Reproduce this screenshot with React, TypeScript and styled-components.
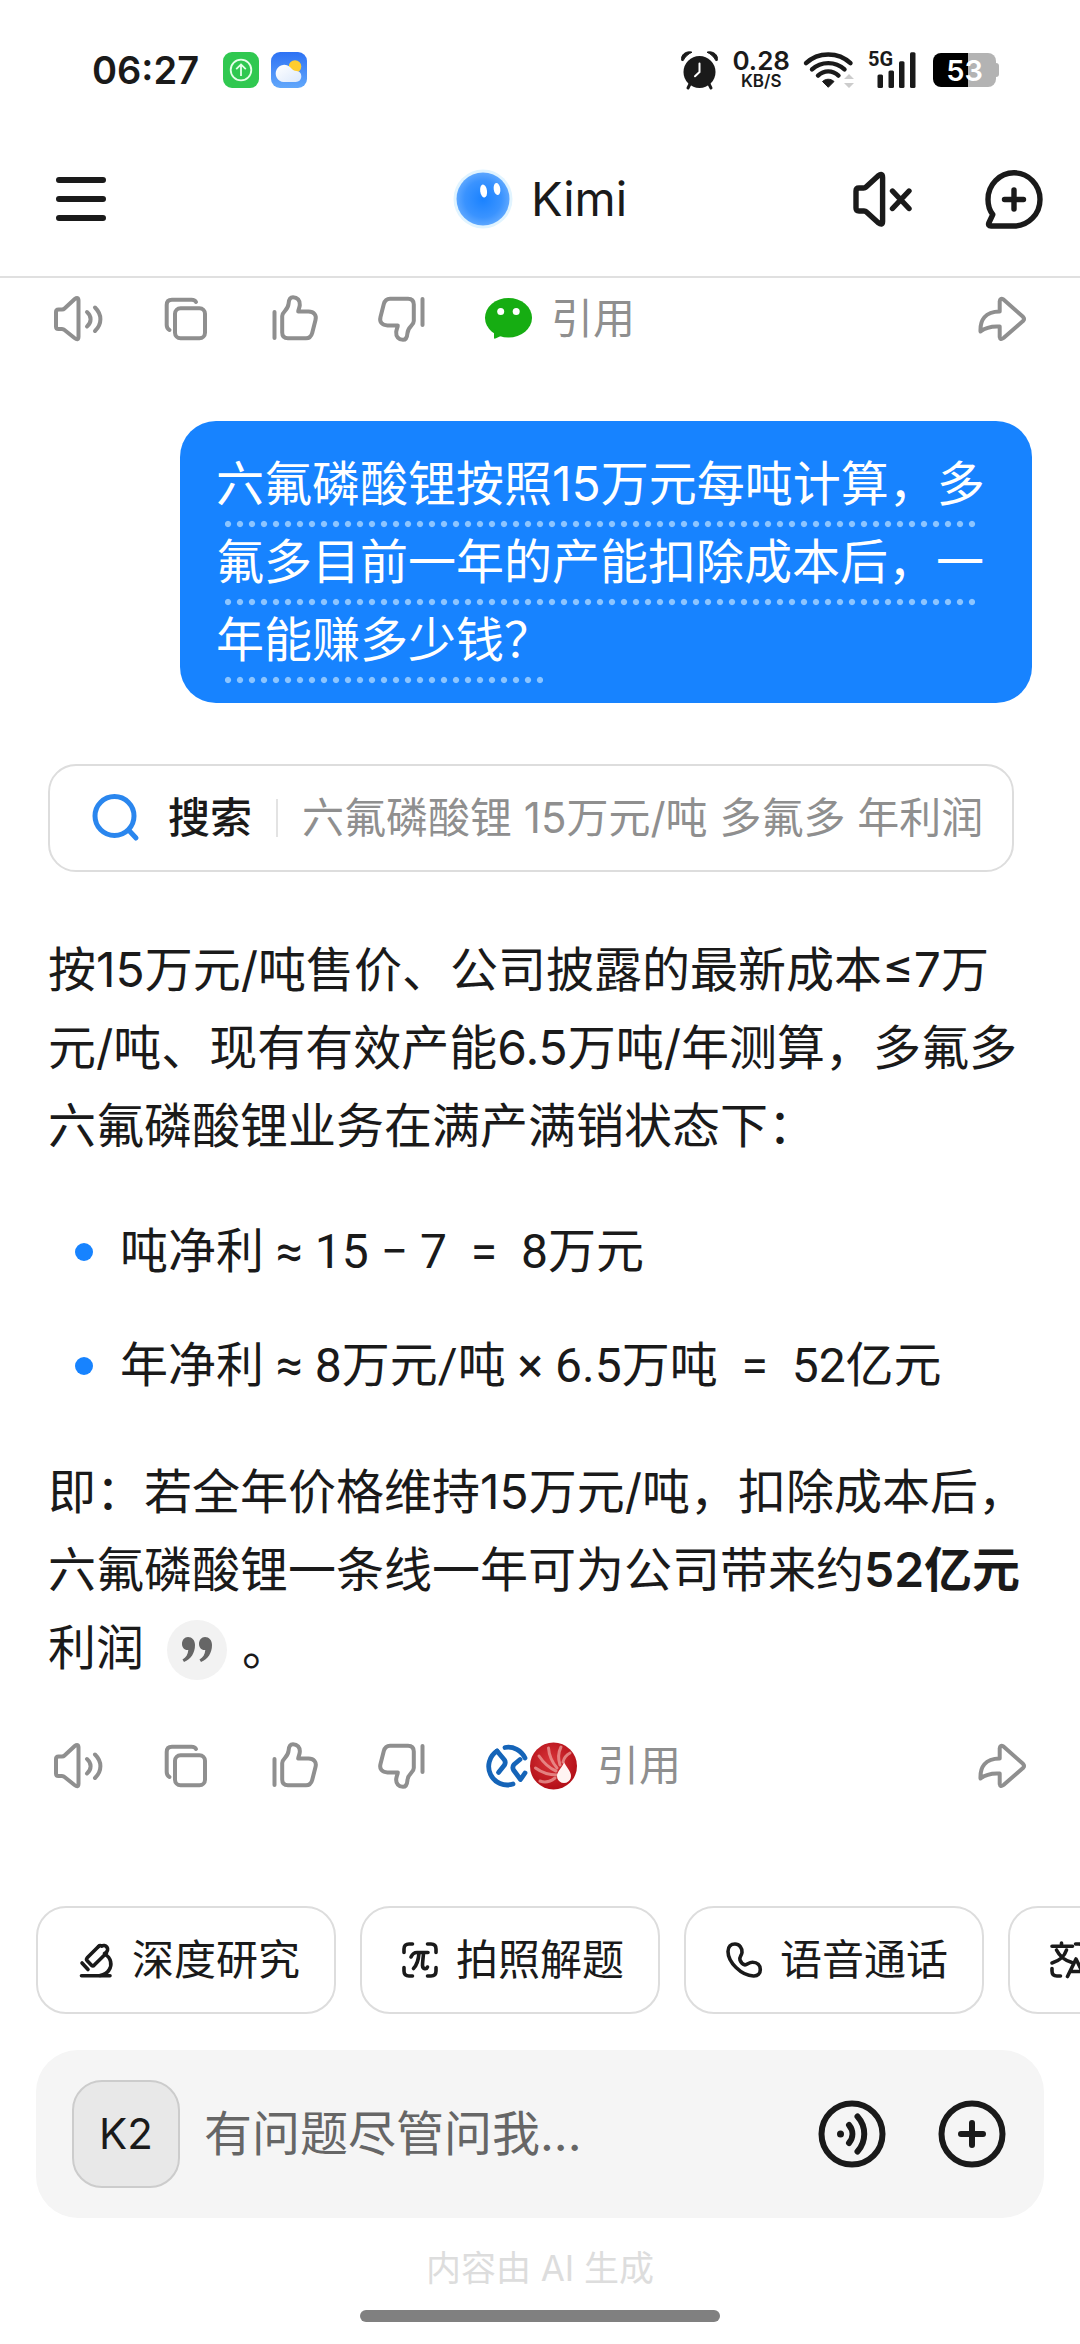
import { FC, ReactNode } from "react";
import styled, { createGlobalStyle } from "styled-components";

const GlobalStyle = createGlobalStyle`
    * {
        box-sizing: border-box;
    }

    body {
        margin: 0;
        background: #fff;
        color: #1a1a1a;
        font-family: Inter, "Noto Sans CJK SC", sans-serif;
        font-size: 48px;
        line-height: 78px;
    }

    button,
    input {
        font: inherit;
        color: inherit;
    }

    svg {
        display: block;
        flex: none;
        overflow: visible;
    }
`;

interface IconProps {
    size: number;
    width?: number;
    stroke?: number;
    children: ReactNode;
}

const Icon: FC<IconProps> = ({ size, width, stroke = 4, children }) => (
    <svg
        width={width ?? size}
        height={size}
        viewBox={`0 0 ${width ?? size} ${size}`}
        fill="none"
        stroke="currentColor"
        strokeWidth={stroke}
        strokeLinecap="round"
        strokeLinejoin="round"
        aria-hidden="true"
    >
        {children}
    </svg>
);

const UploadBadge = () => (
    <svg width="36" height="36" viewBox="0 0 36 36" aria-hidden="true">
        <rect width="36" height="36" rx="9" fill="#30c850" />
        <g fill="none" stroke="#e6ffe9" strokeWidth="1.8">
            <circle cx="18" cy="18" r="10.3" />
            <path d="M18 24V13M13.2 17.2L18 12.4L22.8 17.2" />
        </g>
    </svg>
);

const WeatherBadge = () => (
    <svg width="36" height="36" viewBox="0 0 36 36" aria-hidden="true">
        <defs>
            <linearGradient id="sky" x1="0" y1="0" x2="0" y2="1">
                <stop offset="0" stopColor="#2d72f4" />
                <stop offset="1" stopColor="#62a8fb" />
            </linearGradient>
            <linearGradient id="cloud" x1="0" y1="0" x2="1" y2="1">
                <stop offset="0" stopColor="#fff" />
                <stop offset="1" stopColor="#dbe8fb" />
            </linearGradient>
        </defs>
        <rect width="36" height="36" rx="9" fill="url(#sky)" />
        <circle cx="24" cy="14.5" r="6.3" fill="#ffcd2e" />
        <path
            d="M12.5 30A8.6 8.6 0 1 1 19.5 15.5C21 17.5 23 18.8 25.5 19C28.5 19.2 30.3 21 30.3 24.3C30.3 27.8 28 30 24.8 30Z"
            fill="url(#cloud)"
        />
    </svg>
);

const AlarmIcon = () => (
    <svg width="38" height="38" viewBox="0 0 38 38" aria-hidden="true">
        <circle cx="18.5" cy="21" r="16" fill="#1a1a1a" />
        <path
            d="M.8 9.5C-.8 4 5-.6 11 1.2C7 3 3.8 6 2.2 9.6ZM36.2 9.5C37.8 4 32-.6 26 1.2C30 3 33.2 6 34.8 9.6Z"
            fill="#1a1a1a"
            stroke="#1a1a1a"
            strokeLinejoin="round"
        />
        <path
            d="M9 33L7 37M28 33L30 37"
            stroke="#1a1a1a"
            strokeWidth="3"
            strokeLinecap="round"
        />
        <path
            d="M18.5 12.5V21L14 25.3"
            fill="none"
            stroke="#fff"
            strokeWidth="2"
            strokeLinecap="round"
        />
    </svg>
);

const WifiIcon = () => (
    <svg width="52" height="38" viewBox="0 0 52 38" aria-hidden="true">
        <g
            fill="none"
            stroke="#1a1a1a"
            strokeWidth="4.4"
            strokeLinecap="round"
        >
            <path d="M3 12.2C15 .5 35.5 .5 47.5 12.2" />
            <path d="M9 18.4C18 10 32.5 10 41.5 18.4" />
            <path d="M15 24.6C21 19 29.5 19 35.5 24.6" />
        </g>
        <path
            d="M19.5 30.5C22.8 27.5 27.7 27.5 31 30.5L25.25 36.3Z"
            fill="#1a1a1a"
            stroke="#1a1a1a"
            strokeLinejoin="round"
        />
        <path d="M41 28L46 23L51 28ZM41 32H51L46 37Z" fill="#ccc" />
    </svg>
);

const SignalIcon = () => (
    <svg width="48" height="38" viewBox="0 0 48 38" aria-hidden="true">
        <g fill="#1a1a1a">
            <rect x="9.5" y="23.4" width="5.5" height="13.6" rx="1.5" />
            <rect x="20.5" y="19.4" width="5.5" height="17.6" rx="1.5" />
            <rect x="31" y="10.3" width="5.5" height="26.7" rx="1.5" />
            <rect x="42" y="1.2" width="5.5" height="35.8" rx="1.5" />
        </g>
    </svg>
);

const MenuIcon = () => (
    <Icon size={60} width={72} stroke={6}>
        <path d="M23 11H67M23 30H67M23 49H67" />
    </Icon>
);

const KimiFace = () => (
    <svg width="60" height="60" viewBox="0 0 60 60" aria-hidden="true">
        <defs>
            <radialGradient id="face" cx=".5" cy=".5" r=".58">
                <stop offset="0" stopColor="#1a82ff" />
                <stop offset=".6" stopColor="#3a93ff" />
                <stop offset="1" stopColor="#6fb1ff" />
            </radialGradient>
        </defs>
        <circle cx="30" cy="30" r="29.5" fill="#e1f4ff" />
        <circle cx="30" cy="30" r="26.5" fill="url(#face)" />
        <ellipse
            cx="30.6"
            cy="22"
            rx="3.4"
            ry="6.6"
            fill="#fff"
            transform="rotate(-8 30.6 22)"
        />
        <ellipse
            cx="44"
            cy="20"
            rx="3.3"
            ry="6"
            fill="#fff"
            transform="rotate(-8 44 20)"
        />
    </svg>
);

const MuteIcon = () => (
    <Icon size={60} stroke={5.4}>
        <path d="M7 19H11.5Q13 19 14 18L26 7Q30.6 3.5 30.6 8.5V52.5Q30.6 57 26 53.5L14.5 43Q13.5 42 12 42H7Q4 42 4 39V22Q4 19 7 19Z" />
        <path d="M40.5 22L57 39.5M57 22L40.5 39.5" />
    </Icon>
);

const NewChatIcon = () => (
    <Icon size={60} stroke={5.4}>
        <path d="M30 57H7Q3.7 57 4.8 54L8.8 45.5C5.5 41.5 4 36.5 4 30.5A26 26.6 0 1 1 30 57Z" />
        <path d="M30 21V40M20.5 30.5H39.5" />
    </Icon>
);

const SpeakerIcon = () => (
    <Icon size={48}>
        <path d="M4.5 14.5H8Q9.5 14.5 10.5 13.5L20.5 4.2Q24.5 1.5 24.5 5.5V41.5Q24.5 46 20.5 43L10.5 35Q9.5 34 8 34H4.5Q2 34 2 31.5V17Q2 14.5 4.5 14.5Z" />
        <path d="M33 17C37.8 21 37.8 27.5 33 31.5M41 12.5C48.2 19.5 48.2 29 41 36" />
    </Icon>
);

const CopyIcon = () => (
    <Icon size={48}>
        <path d="M7.5 35Q4.7 33.5 4.7 30V10Q4.7 4.7 10 4.7H29.5Q33 4.7 34 7" />
        <rect x="13" y="13.3" width="30" height="30" rx="5.5" />
    </Icon>
);

const thumbPath =
    "M12.2 21C12.2 16 18 16 18.6 8.5C18.9 4.2 20 2.2 23 2.2C27.3 2.2 30.2 5.5 29.8 10C29.6 12.5 28.5 14 28.2 16.6H38.5C44 16.6 46.8 20 45.5 25L42.2 38C41.2 41.7 39.5 43.3 36 43.3H18Q12.2 43.3 12.2 37.5Z";

const ThumbUpIcon = () => (
    <Icon size={48}>
        <path d="M4.5 17V43" />
        <path d={thumbPath} />
    </Icon>
);

const ThumbDownIcon = () => (
    <Icon size={48}>
        <g transform="rotate(180 24 23.5)">
            <path d="M3.5 17V43" />
            <path d={thumbPath} />
        </g>
    </Icon>
);

const ShareIcon = () => (
    <Icon size={48}>
        <path d="M21.7 16.6V6.5Q22 2.5 25.5 4.5L45 21.8Q47 24 45 26L25.5 43Q22.2 45.5 21.7 42V31.5C14 31 7.5 32.5 2.5 36.5C2 25 7 16.8 21.7 16.6Z" />
    </Icon>
);

const WechatIcon = () => (
    <svg width="48" height="48" viewBox="2 0 48 48" aria-hidden="true">
        <g fill="#16ad12">
            <ellipse cx="24.5" cy="22.7" rx="23.5" ry="19.7" />
            <path d="M10 34V42Q9.5 44.5 12 43.3L20 39.5Z" />
        </g>
        <circle cx="16.7" cy="16.5" r="3.5" fill="#fff" />
        <circle cx="32.2" cy="16.5" r="3.5" fill="#fff" />
    </svg>
);

const SourceLogos = () => (
    <svg width="94" height="48" viewBox="2 0 94 48" aria-hidden="true">
        <defs>
            <radialGradient id="shell" cx=".45" cy=".4" r=".6">
                <stop offset="0" stopColor="#d8343a" />
                <stop offset="1" stopColor="#b30f17" />
            </radialGradient>
        </defs>
        <g
            fill="none"
            stroke="#1564b8"
            strokeWidth="4.8"
            strokeLinecap="round"
            strokeLinejoin="round"
        >
            <path d="M21 5.5A18.5 18.5 0 0 1 41 16" />
            <path d="M13 9A18.5 18.5 0 0 0 29 42" />
            <path d="M13 9L20.5 18Q22 20.5 20.5 23L14.5 30.5" />
            <path d="M36 17.5L30 22.5Q28 25 29.5 28L36.5 37.5L41 31" />
        </g>
        <circle cx="69.5" cy="24" r="26" fill="#fff" />
        <circle cx="69.5" cy="24" r="23.5" fill="url(#shell)" />
        <g
            fill="none"
            stroke="#f0a9a5"
            strokeWidth="3"
            strokeLinecap="round"
            opacity=".7"
        >
            <path d="M73 33C64 33 57 30 51.5 26" />
            <path d="M72 29C65 26 59 20 55 14" />
            <path d="M73 26C68 20 65 13 64.5 6" />
            <path d="M76 23C74 17 74 11 77 5" />
            <path d="M79 20C80 16 82 13 86 11" />
            <path d="M71 36C66 40 61 41 56 39" />
        </g>
        <path
            d="M80 20C82 25 87 29 87 34C87 38 84 41 80 41C76 41 73 38 73 34C73 29 79 25 80 20Z"
            fill="#fff4f2"
        />
    </svg>
);

const SearchIcon = () => (
    <Icon size={48} stroke={5}>
        <circle cx="22.5" cy="22" r="19.5" />
        <path d="M37.5 37L44 44" />
    </Icon>
);

const MicroscopeIcon = () => (
    <Icon size={36} stroke={3.6}>
        <path d="M3.5 33.7H32" />
        <path d="M27 12.5C33 15.5 34.5 23 31 28C29 31.5 26 33 22 33.5" />
        <path d="M20.5 4.5L9.2 15.8Q8 17.2 9 18.5L13.5 23.3Q15 24.5 16.3 23L28.5 11" />
        <path d="M20.5 4.5Q22 3 23.5 4.2A3.8 3.8 0 1 1 28 10.5L26.5 11.5" />
        <path d="M4 21L10 27.5" />
    </Icon>
);

const PiScanIcon = () => (
    <Icon size={36} stroke={3.6}>
        <path d="M2 10.5V7Q2 2 7 2H10.5M25.5 2H29Q34 2 34 7V10.5M34 25.5V29Q34 34 29 34H25.5M10.5 34H7Q2 34 2 29V25.5" />
        <path d="M9 15C10.5 11.5 12 10.5 15 10.5H26M17 11C16.5 18 15 23 11.5 26.5M21.5 11C21.2 16 20.5 20 20.5 23.5C20.8 27.5 24.5 27.5 25.5 25" />
    </Icon>
);

const PhoneIcon = () => (
    <Icon size={36} stroke={3.6}>
        <path d="M9 2C13.5 2 16.3 6 16 10.5C15.8 13.5 13 15 14 18C15 20.5 16.8 22.3 18.5 22.8C21 23.5 22.5 20.2 26.5 20.2C31.5 20.2 34.3 23.5 34.3 27.5C34.3 31.5 32 34.2 27.5 34C15 33.5 2 20 2 9.5C2 4.5 5 2 9 2Z" />
    </Icon>
);

const TranslateIcon = () => (
    <Icon size={36} stroke={3.6}>
        <path d="M11.5 1V4.3M2 4.3H22.5M16.5 8C14.5 14 9 19 2 21M6.5 8C9.5 14 14.5 18.5 22 20.5" />
        <path d="M2 26.5V29Q2 34 7 34H10.5M25.5 2H29Q34 2 34 7V10.5" />
        <path d="M17.5 34.5L26 17L34.5 34.5M21 29.5H31" />
    </Icon>
);

const VoiceIcon = () => (
    <Icon size={72} stroke={6}>
        <circle cx="36" cy="36" r="30.5" />
        <circle cx="24.5" cy="36" r="3.5" fill="currentColor" stroke="none" />
        <path d="M33 27C37.5 32.5 37.5 39.5 33 45M41.5 18.5C50.5 28.5 50.5 43.5 41.5 53.5" />
    </Icon>
);

const AddIcon = () => (
    <Icon size={72} stroke={6}>
        <circle cx="36" cy="36" r="30.5" />
        <path d="M36 25V47M25 36H47" />
    </Icon>
);

const QuoteIcon = () => (
    <svg width="32" height="28" viewBox="0 0 32 28" aria-hidden="true">
        <path
            d="M7 1C11 1 14 4 14 9C14 17 10 23 3 26L1.5 23.5C5 21.5 7 18.5 7.3 14C3.5 14.5 1 11.5 1 8C1 4 3.5 1 7 1ZM24 1C28 1 31 4 31 9C31 17 27 23 20 26L18.5 23.5C22 21.5 24 18.5 24.3 14C20.5 14.5 18 11.5 18 8C18 4 20.5 1 24 1Z"
            fill="#666"
        />
    </svg>
);

interface MessageActionsProps {
    logo: ReactNode;
}

const MessageActions: FC<MessageActionsProps> = ({ logo }) => (
    <ActionRow>
        <IconButton aria-label="朗读">
            <SpeakerIcon />
        </IconButton>
        <IconButton aria-label="复制">
            <CopyIcon />
        </IconButton>
        <IconButton aria-label="喜欢">
            <ThumbUpIcon />
        </IconButton>
        <IconButton aria-label="不喜欢">
            <ThumbDownIcon />
        </IconButton>
        <SourceButton>
            {logo}
            引用
        </SourceButton>
        <ShareButton aria-label="分享">
            <ShareIcon />
        </ShareButton>
    </ActionRow>
);

const shortcuts = [
    { label: "深度研究", icon: <MicroscopeIcon /> },
    { label: "拍照解题", icon: <PiScanIcon /> },
    { label: "语音通话", icon: <PhoneIcon /> },
];

export default function App() {
    return (
        <Page>
            <GlobalStyle />
            <StatusBar>
                <Clock>06:27</Clock>
                <UploadBadge />
                <WeatherBadge />
                <StatusRight>
                    <AlarmIcon />
                    <NetSpeed>
                        <b>0.28</b>
                        <small>KB/S</small>
                    </NetSpeed>
                    <WifiIcon />
                    <Signal>
                        <SignalIcon />
                        <SignalLabel>5G</SignalLabel>
                    </Signal>
                    <Battery>53</Battery>
                </StatusRight>
            </StatusBar>

            <Header>
                <IconButton aria-label="菜单">
                    <MenuIcon />
                </IconButton>
                <Title>
                    <KimiFace />
                    Kimi
                </Title>
                <HeaderTools>
                    <IconButton aria-label="静音">
                        <MuteIcon />
                    </IconButton>
                    <IconButton aria-label="新会话">
                        <NewChatIcon />
                    </IconButton>
                </HeaderTools>
            </Header>

            <Chat>
                <MessageActions logo={<WechatIcon />} />

                <UserBubble>
                    <DottedText>
                        六氟磷酸锂按照15万元每吨计算，多氟多目前一年的产能扣除成本后，一年能赚多少钱？
                    </DottedText>
                </UserBubble>

                <SearchCard>
                    <SearchMark>
                        <SearchIcon />
                    </SearchMark>
                    <SearchLabel>搜索</SearchLabel>
                    <SearchQuery>
                        六氟磷酸锂 15万元/吨 多氟多 年利润
                    </SearchQuery>
                </SearchCard>

                <Answer>
                    <p>
                        按15万元/吨售价、公司披露的最新成本≤7万元/吨、现有有效产能6.5万吨/年测算，多氟多六氟磷酸锂业务在满产满销状态下：
                    </p>
                    <BulletList>
                        <li>吨净利 ≈ 15 − 7&nbsp; =&nbsp; 8万元</li>
                        <li>年净利 ≈ 8万元/吨 × 6.5万吨&nbsp; =&nbsp; 52亿元</li>
                    </BulletList>
                    <p>
                        即：若全年价格维持15万元/吨，扣除成本后，六氟磷酸锂一条线一年可为公司带来约
                        <strong>52亿元</strong>利润
                        <QuoteButton aria-label="查看引用">
                            <QuoteIcon />
                        </QuoteButton>
                        。
                    </p>
                </Answer>

                <MessageActions logo={<SourceLogos />} />
            </Chat>

            <Shortcuts>
                {shortcuts.map((item) => (
                    <Chip key={item.label}>
                        {item.icon}
                        {item.label}
                    </Chip>
                ))}
                <Chip aria-label="翻译">
                    <TranslateIcon />
                </Chip>
            </Shortcuts>

            <Composer>
                <ModelButton>K2</ModelButton>
                <MessageInput
                    type="text"
                    aria-label="输入消息"
                    placeholder="有问题尽管问我..."
                />
                <IconButton aria-label="语音输入">
                    <VoiceIcon />
                </IconButton>
                <IconButton aria-label="更多">
                    <AddIcon />
                </IconButton>
            </Composer>

            <Disclaimer>内容由 AI 生成</Disclaimer>
            <HomeBar />
        </Page>
    );
}

const Page = styled.div`
    display: flex;
    flex-direction: column;
    min-height: 100vh;
    padding-bottom: 22px;
    overflow: hidden;
`;

const StatusBar = styled.div`
    display: flex;
    align-items: center;
    gap: 12px;
    height: 122px;
    padding: 18px 81px 0 92px;
    line-height: 1;
`;

const Clock = styled.span`
    margin-right: 12px;
    font-size: 38px;
    font-weight: 600;
`;

const StatusRight = styled.div`
    display: flex;
    align-items: center;
    gap: 13px;
    margin-left: auto;
`;

const NetSpeed = styled.span`
    display: flex;
    flex-direction: column;
    align-items: center;

    b {
        font-size: 26px;
        font-weight: 600;
        line-height: 22px;
    }

    small {
        font-size: 17px;
        font-weight: 600;
        line-height: 18px;
    }
`;

const Signal = styled.span`
    position: relative;
`;

const SignalLabel = styled.span`
    position: absolute;
    top: 0;
    left: 0;
    font-family: Roboto, sans-serif;
    font-size: 20px;
    font-weight: 700;
    line-height: 16px;
`;

const Battery = styled.span`
    display: flex;
    align-items: center;
    justify-content: center;
    position: relative;
    width: 63px;
    height: 34px;
    margin: 0 3px 0 4px;
    border-radius: 8px;
    background: linear-gradient(90deg, #000 56%, #b3b3b3 56%);
    color: #fff;
    font-size: 29px;
    font-weight: 600;

    &::after {
        content: "";
        position: absolute;
        left: 100%;
        width: 3px;
        height: 14px;
        border-radius: 0 3px 3px 0;
        background: #b3b3b3;
    }
`;

const Header = styled.header`
    display: grid;
    grid-template-columns: 1fr auto 1fr;
    align-items: center;
    height: 156px;
    padding: 0 36px;
    border-bottom: 2px solid #e0e0e0;
`;

const Title = styled.h1`
    display: flex;
    align-items: center;
    gap: 18px;
    margin: 0;
    font-size: 47px;
    font-weight: 400;
    line-height: 60px;
`;

const HeaderTools = styled.div`
    display: flex;
    justify-content: flex-end;
    gap: 72px;
`;

const IconButton = styled.button`
    justify-self: start;
    padding: 0;
    border: 0;
    background: none;
    line-height: 0;
    cursor: pointer;
`;

const Chat = styled.main`
    display: flex;
    flex-direction: column;
    flex: 1;
    padding: 17px 48px 0;
`;

const ActionRow = styled.div`
    display: flex;
    align-items: center;
    gap: 60px;
    height: 48px;
    padding: 0 6px;
    color: #8f8f8f;
`;

const SourceButton = styled(IconButton)`
    display: flex;
    align-items: center;
    gap: 17px;
    font-size: 42px;
    line-height: 48px;
`;

const ShareButton = styled(IconButton)`
    margin-left: auto;
`;

const UserBubble = styled.div`
    align-self: flex-end;
    width: 100%;
    max-width: 852px;
    margin-top: 78px;
    padding: 24px 36px;
    border-radius: 36px;
    background: #1783ff;
    color: #fff;
`;

// dotted rule under every line, kept 9px short of the text at both ends
const DottedText = styled.span`
    padding-bottom: 15px;
    background:
        linear-gradient(#1783ff, #1783ff) left bottom / 9px 8px no-repeat,
        linear-gradient(#1783ff, #1783ff) right bottom / 9px 8px no-repeat,
        radial-gradient(closest-side circle, #8cc5ff 65%, transparent 90%) 6px
            100% / 12px 8px repeat-x;
    box-decoration-break: clone;
    -webkit-box-decoration-break: clone;
`;

const SearchCard = styled.div`
    display: flex;
    align-items: center;
    height: 108px;
    margin: 61px 18px 0 0;
    padding: 0 36px 0 42px;
    border: 2px solid #ddd;
    border-radius: 28px;
    font-size: 42px;
    white-space: nowrap;
`;

const SearchMark = styled.span`
    color: #2a86ee;
`;

const SearchLabel = styled.span`
    margin-left: 28px;
    font-weight: 500;
    line-height: 38px;
`;

const SearchQuery = styled.span`
    margin-left: 24px;
    padding-left: 24px;
    border-left: 2px solid #e3e3e3;
    color: #8f8f8f;
    line-height: 38px;
`;

const Answer = styled.article`
    margin: 59px -12px 55px 0;

    p {
        margin: 0;
    }

    strong {
        font-weight: 600;
    }
`;

const BulletList = styled.ul`
    display: flex;
    flex-direction: column;
    gap: 36px;
    margin: 48px 0;
    padding: 0;
    font-family: Roboto, "Noto Sans CJK SC", sans-serif;
    list-style: none;

    li {
        display: flex;
        align-items: center;
        gap: 27px;
        padding-left: 27px;
    }

    li::before {
        content: "";
        width: 18px;
        height: 18px;
        border-radius: 50%;
        background: #1783ff;
    }
`;

const QuoteButton = styled.button`
    display: inline-flex;
    align-items: center;
    justify-content: center;
    width: 60px;
    height: 60px;
    margin: 0 15px 0 23px;
    padding: 0;
    border: 0;
    border-radius: 50%;
    background: #f2f2f2;
    vertical-align: 1px;
    cursor: pointer;
`;

const Shortcuts = styled.nav`
    display: flex;
    gap: 24px;
    margin-top: 116px;
    padding-left: 36px;
    overflow: hidden;
`;

const Chip = styled.button`
    display: flex;
    flex: none;
    align-items: center;
    gap: 18px;
    height: 108px;
    padding: 0 34px 0 40px;
    border: 2px solid #ddd;
    border-radius: 30px;
    background: #fff;
    font-size: 42px;
    line-height: 60px;
    cursor: pointer;
`;

const Composer = styled.div`
    display: flex;
    align-items: center;
    height: 168px;
    margin: 36px 36px 0;
    padding: 0 36px;
    border-radius: 42px;
    background: #f5f5f5;

    ${IconButton} + ${IconButton} {
        margin-left: 48px;
    }
`;

const ModelButton = styled.button`
    width: 108px;
    height: 108px;
    padding: 0;
    border: 2px solid #ccc;
    border-radius: 30px;
    background: #e8e8e8;
    font-size: 42px;
    cursor: pointer;
`;

const MessageInput = styled.input`
    flex: 1;
    min-width: 0;
    height: 78px;
    margin-left: 24px;
    padding: 0;
    border: 0;
    outline: 0;
    background: none;

    &::placeholder {
        color: #666;
        opacity: 1;
    }
`;

const Disclaimer = styled.footer`
    margin-top: 30px;
    color: #ddd;
    font-size: 35px;
    line-height: 40px;
    text-align: center;
`;

const HomeBar = styled.div`
    width: 360px;
    height: 12px;
    margin: 22px auto 0;
    border-radius: 6px;
    background: #808080;
`;
